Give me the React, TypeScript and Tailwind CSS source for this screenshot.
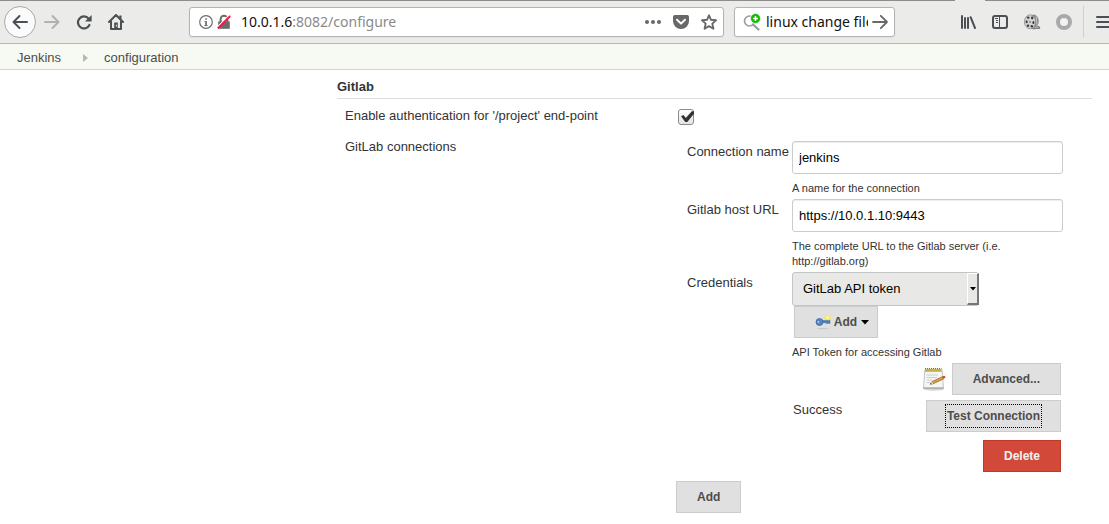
import type { ButtonHTMLAttributes, ReactNode } from "react";

function BackIcon() {
  return (
    <svg width="16" height="16" viewBox="0 0 16 16" fill="none" stroke="#4a5053" strokeWidth="2" strokeLinecap="round" strokeLinejoin="round">
      <path d="M15 8H1.5M7.5 2l-6 6 6 6" />
    </svg>
  );
}

function ForwardIcon() {
  return (
    <svg width="16" height="16" viewBox="0 0 16 16" fill="none" stroke="#b0b1b1" strokeWidth="2" strokeLinecap="round" strokeLinejoin="round">
      <path d="M1 8h13.5M8.5 2l6 6-6 6" />
    </svg>
  );
}

function ReloadIcon() {
  return (
    <svg width="16" height="16" viewBox="0 0 16 16">
      <path d="M12.6 4.6A6 6 0 1 0 13.4 11" fill="none" stroke="#4a5053" strokeWidth="2.2" strokeLinecap="round" />
      <path d="M15.6 1v6.6H9z" fill="#4a5053" />
    </svg>
  );
}

function HomeIcon() {
  return (
    <svg width="16" height="16" viewBox="0 0 16 16">
      <path d="M11.3 1.5h2.2v4h-2.2z" fill="#4a5053" />
      <path d="M1 8l7-7 7 7M3 7.5V15h10V7.5" fill="none" stroke="#4a5053" strokeWidth="2" strokeLinecap="round" strokeLinejoin="round" />
      <path d="M6.2 8.5h3.6V15H6.2z" fill="#4a5053" />
      <path d="M7.9 10.8h1v1.6h-1z" fill="#ebebea" />
    </svg>
  );
}

function InfoIcon() {
  return (
    <svg width="14" height="14" viewBox="0 0 14 14">
      <circle cx="7" cy="7" r="6.3" fill="none" stroke="#6e6e6e" strokeWidth="1.2" />
      <path d="M6.2 3.2h1.7v1.6H6.2zM5.6 6h2.3v4h.7v1H5.4v-1h.8V7h-.6z" fill="#6e6e6e" />
    </svg>
  );
}

function InsecureIcon() {
  return (
    <svg width="14" height="16" viewBox="0 0 14 16">
      <path d="M3.6 8V5.2a3.4 3.4 0 0 1 6.8 0V8" fill="none" stroke="#6b6b6b" strokeWidth="2" />
      <path d="M1.2 7.4h11.6v7.4H1.2z" fill="#6b6b6b" />
      <path d="M.2 13.2L12.4 1" stroke="#fff" strokeWidth="1.4" />
      <path d="M.8 14.4L13.2 2" stroke="#f5154f" strokeWidth="1.9" />
    </svg>
  );
}

function DotsIcon() {
  return (
    <svg width="16" height="16" viewBox="0 0 16 16" fill="#686868">
      <circle cx="2" cy="8" r="2" />
      <circle cx="8" cy="8" r="2" />
      <circle cx="14" cy="8" r="2" />
    </svg>
  );
}

function PocketIcon() {
  return (
    <svg width="16" height="16" viewBox="0 0 16 16">
      <path d="M1.8 1h12.4A1.8 1.8 0 0 1 16 2.8V7A8 8 0 0 1 0 7V2.8A1.8 1.8 0 0 1 1.8 1z" fill="#686868" />
      <path d="M4 5.8l4 3.8 4-3.8" fill="none" stroke="#fff" strokeWidth="2" strokeLinecap="round" strokeLinejoin="round" />
    </svg>
  );
}

function StarIcon() {
  return (
    <svg width="16" height="16" viewBox="0 0 16 16">
      <path d="M8 1.3l2 4.5 5 .5-3.7 3.3 1.1 5.1L8 12.1l-4.4 2.6 1.1-5.1L1 6.3l5-.5z" fill="none" stroke="#686868" strokeWidth="1.9" strokeLinejoin="round" />
    </svg>
  );
}

function SearchPlusIcon() {
  return (
    <svg width="18" height="18" viewBox="0 0 18 18">
      <circle cx="6.5" cy="8" r="5" fill="none" stroke="#9a9a9a" strokeWidth="1.6" />
      <path d="M10 11.5l5.5 5" stroke="#9a9a9a" strokeWidth="2.2" strokeLinecap="round" />
      <circle cx="12.5" cy="5.5" r="5" fill="#12bc00" stroke="#fff" strokeWidth=".8" />
      <path d="M12.5 3v5M10 5.5h5" stroke="#fff" strokeWidth="1.5" />
    </svg>
  );
}

function GoIcon() {
  return (
    <svg width="16" height="16" viewBox="0 0 16 16" fill="none" stroke="#686868" strokeWidth="1.8" strokeLinecap="round" strokeLinejoin="round">
      <path d="M1 8h14M8.8 1.8L15 8l-6.2 6.2" />
    </svg>
  );
}

function LibraryIcon() {
  return (
    <svg width="16" height="16" viewBox="0 0 16 16" fill="none" stroke="#4a5053" strokeWidth="2" strokeLinecap="round">
      <path d="M2 2v12M5 4v10M8 4v10" />
      <path d="M10.6 3.2L15 14" />
    </svg>
  );
}

function SidebarIcon() {
  return (
    <svg width="16" height="16" viewBox="0 0 16 16" fill="none" stroke="#4a5053">
      <rect x="1" y="2" width="14" height="12" rx="2" strokeWidth="2" />
      <path d="M7.5 2v12" />
      <path d="M3 4.5h3M4 6.5h2M4 8.5h2" />
    </svg>
  );
}

function ReelIcon() {
  return (
    <svg width="18" height="18" viewBox="0 0 18 18">
      <ellipse cx="10.5" cy="8.5" rx="5.2" ry="7" fill="#8a8a8a" />
      <path d="M9 15.5c2 1 4-.5 7.5 0l.3-1.500-3-.8" fill="#aaa" stroke="#555" strokeWidth=".7" />
      <ellipse cx="7" cy="8.800" rx="5.6" ry="7" fill="#d2d2d2" stroke="#8a8a8a" strokeWidth=".8" />
      <g fill="#3a3a3a">
        <ellipse cx="5.2" cy="4.6" rx="1.3" ry="1.2" />
        <ellipse cx="9.2" cy="4.9" rx="1.2" ry="1.3" />
        <ellipse cx="3.6" cy="8.8" rx="1" ry="1.500" />
        <ellipse cx="10.4" cy="9.4" rx="1" ry="1.500" />
        <ellipse cx="5" cy="12.8" rx="1.2" ry="1.200" />
        <ellipse cx="8.800" cy="13.2" rx="1.200" ry="1.200" />
        <circle cx="7" cy="9" r=".7" />
      </g>
      <path d="M13.200 3.500l1 10" stroke="#d0d0d0" strokeWidth=".8" />
    </svg>
  );
}

function RingIcon() {
  return (
    <svg width="16" height="16" viewBox="0 0 16 16">
      <circle cx="8" cy="8" r="6" fill="#f2f2f2" stroke="#a9a9a9" strokeWidth="4" />
    </svg>
  );
}

function MenuIcon() {
  return (
    <svg width="16" height="16" viewBox="0 0 16 16" stroke="#4a5053" strokeWidth="2" strokeLinecap="round">
      <path d="M1 3h14M1 8h14M1 13h14" />
    </svg>
  );
}

function KeyIcon() {
  return (
    <svg width="16" height="16" viewBox="0 0 16 16" className="shrink-0">
      <ellipse cx="8" cy="14.6" rx="6" ry=".7" fill="#c9c9c9" />
      <circle cx="12.500" cy="4" r="3" fill="#f3ec4a" />
      <circle cx="12.500" cy="3.500" r="1.200" fill="#fffbb8" />
      <path d="M7 6.600h8V9.400h-1.200v-.7h-1v.7h-1.500v-.7H7z" fill="#4a7ebd" stroke="#3a69a5" strokeWidth=".5" />
      <circle cx="4.500" cy="8" r="3.500" fill="#5587c5" stroke="#3a69a5" strokeWidth=".8" />
      <circle cx="3.400" cy="8" r=".9" fill="#b5cbe6" />
    </svg>
  );
}

function NotepadIcon() {
  return (
    <svg width="24" height="24" viewBox="0 0 24 24">
      <ellipse cx="12" cy="22.500" rx="10" ry="1.200" fill="#d5d5d5" />
      <path d="M2.800 3h17.400l1.300 18.500h-20z" fill="#f5f5f5" stroke="#b5b5b5" strokeWidth=".8" />
      <path d="M1.500 20.300h20v1.400h-20z" fill="#a8a8a8" />
      <path d="M3 1.800h16.500v3H3z" fill="#c8b13a" />
      <path d="M3 1.500h16.500" stroke="#8a7820" strokeDasharray="1 1" />
      <path d="M4.500 8H16M4.500 10.500H15M4.500 13H10M4.500 15.500H8" stroke="#cfcfcf" />
      <path d="M8 17.200l2-2.600 10.500-4.900 1.100 2.200-10.500 4.900z" fill="#dda044" stroke="#8a6020" strokeWidth=".7" />
      <path d="M20.300 9.500l1.700-.8c1 0 1.700 1.200 1.300 2l-1.700 1.100z" fill="#e0412f" />
      <path d="M8 17.200l2-2.600 1.100 2.200z" fill="#ead6a8" />
      <path d="M8 17.200l.9-1.200.6.900z" fill="#222" />
    </svg>
  );
}

function IconButton({ label, children }: { label: string; children: ReactNode }) {
  return (
    <button type="button" aria-label={label} className="flex h-8 w-8 shrink-0 items-center justify-center">
      {children}
    </button>
  );
}

function BrowserBar() {
  return (
    <header className="font-['Noto_Sans',sans-serif]">
      <div className="flex h-px bg-[#8f8d8b]">
        <div className="ml-auto w-[30px] bg-[#ebebea]" />
        <div className="w-[124px]" />
      </div>
      <div className="flex h-[43px] items-center overflow-hidden border-b border-[#b5b8b0] bg-[#ebebea] pl-1">
        <button type="button" aria-label="Back" className="flex h-8 w-8 shrink-0 items-center justify-center rounded-full border border-[#a9a9a8] bg-[#fbfbfb]">
          <BackIcon />
        </button>
        <IconButton label="Forward"><ForwardIcon /></IconButton>
        <IconButton label="Reload"><ReloadIcon /></IconButton>
        <IconButton label="Home"><HomeIcon /></IconButton>

        <div className="ml-[57px] flex h-[30px] min-w-0 flex-1 items-center rounded-[3px] border border-[#b4b4b2] bg-white pr-1.5 pl-[9px] shadow-xs">
          <InfoIcon />
          <span className="ml-1 shrink-0"><InsecureIcon /></span>
          <p className="ml-2.5 min-w-0 flex-1 truncate text-sm text-[#8a8a8a]">
            <span className="text-[#111111]">10.0.1.6</span>:8082/configure
          </p>
          <div className="flex shrink-0 gap-3">
            <button type="button" aria-label="Page actions"><DotsIcon /></button>
            <button type="button" aria-label="Save to Pocket"><PocketIcon /></button>
            <button type="button" aria-label="Bookmark this page"><StarIcon /></button>
          </div>
        </div>

        <div className="ml-2.5 flex h-[30px] w-[161px] shrink-0 items-center rounded-[3px] border border-[#b4b4b2] bg-white pr-1.5 pl-2 shadow-xs">
          <SearchPlusIcon />
          <input
            aria-label="Search"
            defaultValue="linux change file"
            className="ml-[5px] min-w-0 flex-1 bg-transparent text-sm text-[#111111] outline-none"
          />
          <button type="button" aria-label="Go" className="ml-1"><GoIcon /></button>
        </div>

        <div className="ml-[57px] flex shrink-0">
          <IconButton label="Library"><LibraryIcon /></IconButton>
          <IconButton label="Sidebars"><SidebarIcon /></IconButton>
          <IconButton label="Video downloader"><ReelIcon /></IconButton>
          <IconButton label="Extension"><RingIcon /></IconButton>
        </div>
        <div className="ml-[3px] h-8 w-px shrink-0 bg-[#cfcfce]" />
        <button type="button" aria-label="Open menu" className="ml-3 w-[13px] shrink-0 overflow-hidden">
          <MenuIcon />
        </button>
      </div>
    </header>
  );
}

function Breadcrumbs() {
  return (
    <nav aria-label="Breadcrumb" className="flex h-[26px] items-center border-b border-[#d3d6d0] bg-[#f6faf2] pt-0.5 pl-[17px] text-[13px] text-[#4d4d4d]">
      <a href="#jenkins">Jenkins</a>
      <svg width="5" height="8" viewBox="0 0 5 8" className="mr-4 ml-[22px]">
        <path d="M0 0l5 4-5 4z" fill="#b3b6b1" />
      </svg>
      <a href="#configuration">configuration</a>
    </nav>
  );
}

function GrayButton({ className = "", children, ...rest }: ButtonHTMLAttributes<HTMLButtonElement>) {
  return (
    <button
      type="button"
      className={`flex h-8 items-center justify-center border border-[#cccccc] bg-[#e0e0e0] px-5 text-xs font-bold text-[#4d4d4d] ${className}`}
      {...rest}
    >
      {children}
    </button>
  );
}

function Field({ label, id, help, children }: { label: string; id: string; help: string; children: ReactNode }) {
  return (
    <div className="grid grid-cols-[105px_1fr]">
      <label htmlFor={id} className="pt-[3px] leading-4 whitespace-nowrap">{label}</label>
      <div>
        {children}
        <p className="mt-[7px] mb-[3px] max-w-60 text-[11px] leading-[15px]">{help}</p>
      </div>
    </div>
  );
}

const inputStyle =
  "block h-[33px] w-full rounded-[3px] border border-[#cccccc] bg-white px-1.5 text-[13px] text-black shadow-[inset_0_1px_1px_#00000013] outline-none";

export default function App() {
  return (
    <div className="min-h-screen bg-white font-['Liberation_Sans',Arial,sans-serif]">
      <BrowserBar />
      <Breadcrumbs />
      <form className="pt-2 pr-[17px] pb-3 pl-[337px] text-[13px] text-[#333333]">
        <h2 className="border-b border-[#dddddd] pb-0.5 leading-[18px] font-bold">Gitlab</h2>

        <div className="grid grid-cols-[331px_1fr] pt-2 pl-2">
          <label htmlFor="auth" className="pt-px leading-4">Enable authentication for '/project' end-point</label>
          <div className="pt-0.5 pl-0.5">
            <div className="grid h-4 w-4">
              <input
                id="auth"
                type="checkbox"
                defaultChecked
                className="peer col-start-1 row-start-1 h-4 w-4 appearance-none rounded-[3px] border border-[#8b8b89] bg-linear-to-b from-white to-[#e4e4e3]"
              />
              <svg viewBox="0 0 16 16" className="pointer-events-none invisible col-start-1 row-start-1 h-4 w-4 peer-checked:visible">
                <path d="M3 7.2l2.500-1.200 2.300 3L13.800 2.200H16v2.600L9.300 13H7.200z" fill="#2e3436" />
              </svg>
            </div>
          </div>
        </div>

        <div className="grid grid-cols-[331px_1fr] pt-[14px] pl-2">
          <span className="leading-4">GitLab connections</span>
          <div className="pt-0.5">
            <div className="pr-[29px] pl-[11px]">
              <Field label="Connection name" id="name" help="A name for the connection">
                <input id="name" defaultValue="jenkins" className={inputStyle} />
              </Field>
              <Field label="Gitlab host URL" id="host" help="The complete URL to the Gitlab server (i.e. http://gitlab.org)">
                <input id="host" defaultValue="https://10.0.1.10:9443" className={inputStyle} />
              </Field>
              <Field label="Credentials" id="credentials" help="API Token for accessing Gitlab">
                <div className="grid h-[34px] w-[187px]">
                  <select
                    id="credentials"
                    className="col-start-1 row-start-1 appearance-none rounded-[3px] border border-[#c4c4c4] bg-[#e8e8e7] pr-4 pl-2.5 text-[13px] text-black outline-none"
                  >
                    <option>GitLab API token</option>
                  </select>
                  <span className="pointer-events-none col-start-1 row-start-1 my-px flex w-3 items-center justify-center justify-self-end border-t border-r-2 border-b-2 border-l border-t-white border-r-[#777777] border-b-[#777777] border-l-white bg-[#e8e8e7]">
                    <svg width="6" height="4" viewBox="0 0 6 4"><path d="M0 0h6L3 3.5z" fill="#000" /></svg>
                  </span>
                </div>
                <GrayButton className="ml-0.5 w-[84px] pr-2">
                  <KeyIcon />
                  <span className="mr-1 ml-[3px]">Add</span>
                  <svg width="8" height="5" viewBox="0 0 8 5" className="shrink-0"><path d="M0 0h8L4 4.500z" fill="#000" /></svg>
                </GrayButton>
              </Field>
            </div>

            <div className="flex flex-col items-end pr-[31px]">
              <div className="flex items-center gap-1.5">
                <NotepadIcon />
                <GrayButton>Advanced...</GrayButton>
              </div>
              <div className="mt-[5px] flex w-full justify-between pl-[117px]">
                <output className="pt-0.5 leading-4">Success</output>
                <GrayButton>
                  <span className="-mx-0.5 border border-dotted border-black px-px py-[3px] leading-4">Test Connection</span>
                </GrayButton>
              </div>
              <button type="button" className="mt-2 h-8 border border-[#c03a2c] bg-[#d24939] px-5 text-xs font-bold text-[#f2f2f2]">
                Delete
              </button>
            </div>
            <GrayButton className="mt-[9px]">Add</GrayButton>
          </div>
        </div>
      </form>
    </div>
  );
}
